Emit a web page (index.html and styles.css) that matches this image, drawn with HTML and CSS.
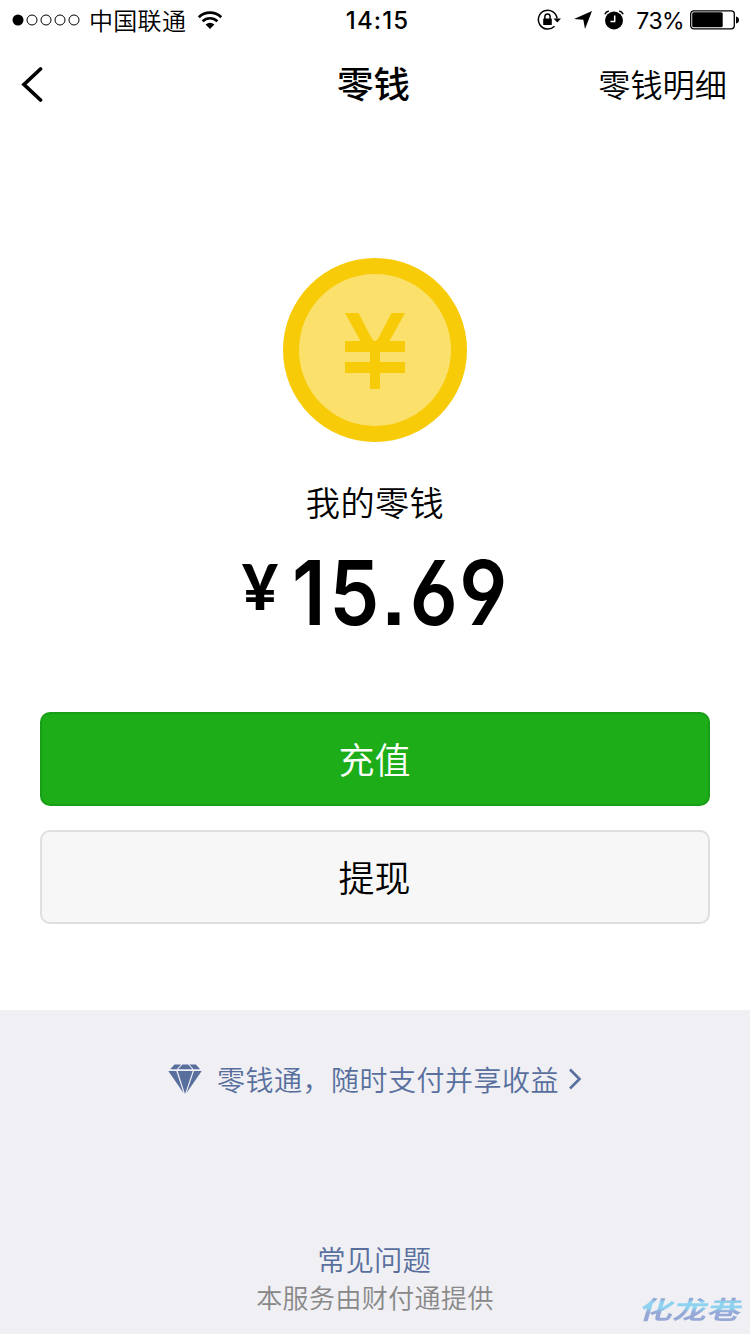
FILE: index.html
```html
<!DOCTYPE html>
<html lang="zh-CN">
<head>
<meta charset="utf-8">
<title>零钱</title>
<link rel="stylesheet" href="styles.css">
</head>
<body>
<div class="screen">
  <header class="status">
    <div class="status-left">
      <svg class="signal" width="68" height="14" viewBox="0 0 68 14"><circle cx="6" cy="7" r="5.5"/><g fill="none" stroke="#000" stroke-width="1"><circle cx="20" cy="7" r="5"/><circle cx="34" cy="7" r="5"/><circle cx="48" cy="7" r="5"/><circle cx="62" cy="7" r="5"/></g></svg>
      <span class="carrier">中国联通</span>
      <svg class="wifi" width="26" height="20" viewBox="0 0 26 20"><g fill="none" stroke="#000" stroke-width="2.7"><path d="M1.8 7.2A16 16 0 0 1 24.200 7.200"/><path d="M5.600 11.300A10.500 10.500 0 0 1 20.400 11.300"/></g><path d="M8.600 14.500Q13 10.800 17.400 14.500L13 19Z"/></svg>
    </div>
    <time class="clock">14:15</time>
    <div class="status-right">
      <svg class="lock" width="24" height="22" viewBox="0 0 24 22"><path d="M17.500 17.200A9.400 9.400 0 1 1 20.100 9.500" fill="none" stroke="#000" stroke-width="1.500"/><path d="M16.500 9.500h7.500l-3.700 4z"/><rect x="6.200" y="9.500" width="8.600" height="6.500" rx=".6"/><path d="M7.900 10V7.500a2.600 2.600 0 0 1 5.200 0V10" fill="none" stroke="#000" stroke-width="1.500"/></svg>
      <svg class="arrow" width="18" height="18" viewBox="0 0 18 18"><path d="M18 0L0 8L9.300 8.800L11 18Z"/></svg>
      <svg class="alarm" width="20" height="20" viewBox="0 0 20 20"><circle cx="10" cy="10.500" r="9"/><path d="M.8 4.200Q2 1.700 4.800 1M19.200 4.200Q18 1.700 15.200 1" fill="none" stroke="#000" stroke-width="1.500"/><path d="M10.700 5.500v6H6.500" fill="none" stroke="#fff" stroke-width="1.500"/></svg>
      <span class="percent">73%</span>
      <svg class="battery" width="49" height="20" viewBox="0 0 49 20"><rect x=".7" y=".8" width="43.600" height="18" rx="3" fill="none" stroke="#000" stroke-width="1.300"/><rect x="2.200" y="2.300" width="30.500" height="15" rx="1.500"/><path d="M46 6.500q3 .5 3 3.500t-3 3.500z"/></svg>
    </div>
  </header>
  <nav class="nav">
    <svg class="back" width="23" height="36" viewBox="0 0 23 36"><path d="M20.500 3L4 18.500L20.500 34" fill="none" stroke="#000" stroke-width="3.700" stroke-linecap="round"/></svg>
    <h1 class="title">零钱</h1>
    <a class="detail">零钱明细</a>
  </nav>
  <main class="wallet">
    <svg class="coin" width="184" height="184" viewBox="0 0 184 184"><circle cx="92" cy="92" r="92" fill="#f8cb08"/><circle cx="92" cy="92" r="76" fill="#fbe16c"/><path d="M62 55h13.500l13.500 26q3 4 6 0l13.500-26h13.500l-15.500 28H122v11H97v10h25v11H97v16H87v-16H62v-11h25V94H62V83h15.500z" fill="#f8cb08"/></svg>
    <p class="label">我的零钱</p>
    <p class="amount"><span class="yen">¥</span><span class="digits">15.69</span></p>
    <div class="actions">
      <button class="btn primary">充值</button>
      <button class="btn plain">提现</button>
    </div>
  </main>
  <footer class="footer">
    <a class="promo">
      <svg class="gem" width="34" height="31" viewBox="0 0 34 31" fill="#586f9e"><path d="M6.500.5H13L8.800 5.300H2.200zM14.300.5h6l4 4.800H10.200zM21.500.5h6.400l4.200 4.800h-6.500zM.3 7h8L15.500 29zM9.700 7h15L17 30zM26 7h7.700L18.500 29z"/></svg>
      <span class="promo-text">零钱通，随时支付并享收益</span>
      <svg class="chev" width="14" height="24" viewBox="0 0 14 24"><path d="M2 2.500L11.500 12L2 21.500" fill="none" stroke="#586f9e" stroke-width="2.600"/></svg>
    </a>
    <div class="foot-links">
      <a class="faq">常见问题</a>
      <p class="provider">本服务由财付通提供</p>
    </div>
    <span class="mark">化龙巷</span>
  </footer>
</div>
</body>
</html>
```
FILE: styles.css
```css
* { box-sizing: border-box; }
body { margin: 0; background: #fff; color: #000; font-family: "Noto Sans CJK SC", sans-serif; font-weight: 350; }
p, h1 { margin: 0; }
svg { display: block; flex: none; }
.screen { width: 750px; height: 1334px; display: flex; flex-direction: column; overflow: hidden; }
.status { height: 40px; display: grid; grid-template-columns: 1fr auto 1fr; align-items: center; padding: 0 11px 0 12px; }
.status-left, .status-right { display: flex; align-items: center; }
.status-right { justify-content: flex-end; }
.carrier { margin-left: 9px; font-size: 24px; line-height: 40px; letter-spacing: .3px; }
.wifi { margin-left: 11px; }
.clock { padding: 2px 0 0 4px; font: 500 24px/38px Inter, sans-serif; letter-spacing: 1.1px; }
.lock { margin-right: 2px; }
.arrow { margin-left: 11px; }
.alarm { margin-left: 12px; }
.percent { margin-left: 12px; padding-top: 2px; font: 400 23px/38px Inter, sans-serif; letter-spacing: -.6px; }
.battery { margin-left: 6px; }
.nav { height: 88px; display: grid; grid-template-columns: 1fr auto 1fr; align-items: center; padding: 0 23px 0 20px; }
.title { padding-bottom: 3px; font-size: 36.500px; line-height: 83px; font-weight: 500; }
.detail { justify-self: end; padding-bottom: 2px; font-size: 32.200px; line-height: 86px; }
.wallet { height: 882px; display: flex; flex-direction: column; align-items: center; padding-top: 130px; }
.label { margin-top: 34px; font-size: 34.200px; line-height: 50px; letter-spacing: .4px; }
.amount { display: flex; align-self: stretch; height: 96px; margin-top: 19px; padding-left: 242px; }
.yen { width: 50px; font: 900 62px/82px Lato, sans-serif; }
.digits { font: 600 90px/96px Inter, sans-serif; font-feature-settings: "cv03", "cv04", "ss01", "ss07"; letter-spacing: 4px; transform: scaleX(.885); transform-origin: left center; }
.actions { width: 670px; margin-top: 71px; display: flex; flex-direction: column; gap: 24px; }
.btn { height: 94px; padding: 0 1px 2px 0; border: 2px solid #dfdfdf; border-radius: 10px; font: 350 36px/86px "Noto Sans CJK SC", sans-serif; }
.primary { background: #1cad19; border-color: #179e16; color: #fff; }
.plain { background: #f7f7f7; color: #000; }
.footer { position: relative; flex: 1; background: #efeff4; display: flex; flex-direction: column; align-items: center; padding-top: 49px; color: #586f9e; }
.promo { height: 40px; display: flex; align-items: center; }
.promo-text { margin-left: 15px; font-size: 28px; line-height: 40px; letter-spacing: .5px; }
.chev { margin-left: 9px; }
.foot-links { margin-top: 140px; text-align: center; }
.faq { display: block; padding-right: 2px; font-size: 28.400px; line-height: 40px; }
.provider { font-size: 26px; line-height: 36px; letter-spacing: .4px; color: #888; }
.mark { position: absolute; right: 7px; bottom: 9px; font-size: 25px; line-height: 34px; font-weight: 700; transform: scaleX(1.36) skewX(-12deg); transform-origin: right center; color: transparent; background: linear-gradient(#8fa6d3 25%, #8ed2f0 32%, #8ed2f0 50%, #96a9d6 62%); -webkit-background-clip: text; background-clip: text; }
```
